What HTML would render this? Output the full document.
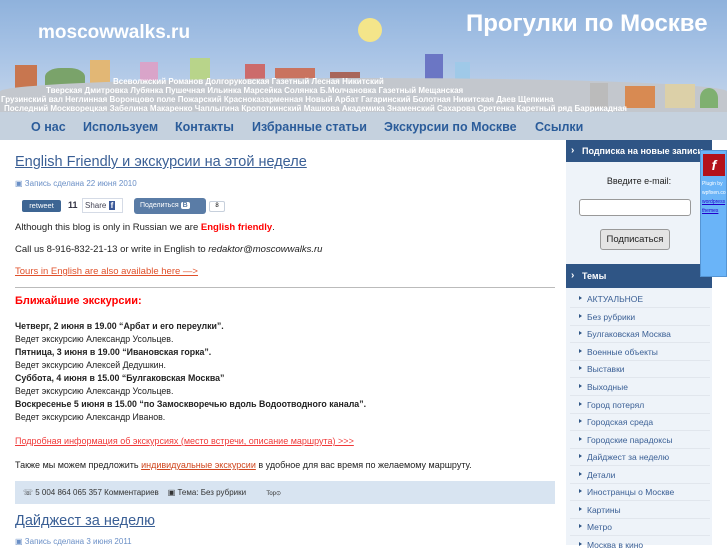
<!DOCTYPE html>
<html><head><meta charset="utf-8">
<style>
*{margin:0;padding:0;box-sizing:border-box}
body{width:727px;height:545px;overflow:hidden;background:#fff;font-family:"Liberation Sans",sans-serif;position:relative}
.abs{position:absolute}
#hdr{left:0;top:0;width:727px;height:112px;background:linear-gradient(180deg,#8fb2dc 0%,#a9c4e6 50%,#c6d6ea 100%)}
#hill{left:0;top:78px;width:727px;height:34px;background:#c3c7cd;border-radius:50% 50% 0 0/40% 40% 0 0}
#nav{left:0;top:112px;width:727px;height:28px;background:#c5d1de}
#nav span{position:absolute;top:8px;font-size:12.5px;font-weight:bold;color:#2b5c9a}
.st{position:absolute;font-size:8px;color:#fff;white-space:nowrap;font-weight:bold}
.b{position:absolute;bottom:0}
a{color:#3a5f95}
.main{left:15px;font-size:9px;color:#222}
.side{left:566px;width:146px}
.sh{background:#2f5585;color:#fff;font-weight:bold;font-size:9px;padding-left:16px;height:22px;line-height:22px}
.sh:before{content:"›";position:absolute;left:5px;font-size:10px}
.li{position:absolute;left:587px;font-size:8.5px;color:#3a5f95}
.li:before{content:"";position:absolute;left:-8px;top:2px;border-left:3px solid #2f5585;border-top:2.5px solid transparent;border-bottom:2.5px solid transparent}
.sep{position:absolute;left:570px;width:140px;height:1px;background:#e1e6ed}
</style></head><body>
<div id="hdr" class="abs"></div>
<div class="abs" style="left:10px;top:60px;width:460px;height:30px">
<div class="b" style="left:5px;width:22px;height:25px;background:#c8764f"></div>
<div class="b" style="left:35px;width:40px;height:22px;background:#7aa36a;border-radius:40% 40% 0 0"></div>
<div class="b" style="left:80px;width:20px;height:30px;background:#e2b775"></div>
<div class="b" style="left:130px;width:18px;height:28px;background:#d9a4c9"></div>
<div class="b" style="left:180px;width:20px;height:32px;background:#b8d48a"></div>
<div class="b" style="left:235px;width:20px;height:26px;background:#cc6b6b"></div>
<div class="b" style="left:265px;width:40px;height:22px;background:#c9735f"></div>
<div class="b" style="left:320px;width:30px;height:18px;background:#a8665a"></div>
<div class="b" style="left:415px;width:18px;height:36px;background:#6b76c4"></div>
<div class="b" style="left:445px;width:15px;height:28px;background:#9fc9e8"></div>
</div>
<div id="hill" class="abs"></div>
<div class="abs" style="left:580px;top:75px;width:140px;height:33px">
<div class="b" style="left:10px;width:18px;height:25px;background:#bbb"></div>
<div class="b" style="left:45px;width:30px;height:22px;background:#d88a52"></div>
<div class="b" style="left:85px;width:30px;height:24px;background:#dcd0a8"></div>
<div class="b" style="left:120px;width:18px;height:20px;background:#7fb070;border-radius:50% 50% 0 0"></div>
</div>
<div class="abs" style="left:358px;top:18px;width:24px;height:24px;border-radius:50%;background:#f4e58a"></div>
<div class="abs" style="left:38px;top:22px;font-size:19px;font-weight:bold;color:#fff">moscowwalks.ru</div>
<div class="abs" style="left:466px;top:10px;font-size:24px;font-weight:bold;color:#fff">Прогулки по Москве</div>
<div class="st" style="left:113px;top:77px">Всеволжский  Романов Долгоруковская Газетный Лесная Никитский</div>
<div class="st" style="left:46px;top:86px">Тверская Дмитровка Лубянка Пушечная Ильинка Марсейка Солянка Б.Молчановка Газетный Мещанская</div>
<div class="st" style="left:1px;top:95px">Грузинский вал Неглинная Воронцово поле Пожарский Красноказарменная Новый Арбат Гагаринский  Болотная Никитская Даев Щепкина</div>
<div class="st" style="left:4px;top:104px">Последний Москворецкая Забелина Макаренко Чаплыгина Кропоткинский Машкова Академика Знаменский Сахарова Сретенка Каретный ряд Баррикадная</div>
<div id="nav" class="abs">
<span style="left:31px">О нас</span><span style="left:83px">Используем</span><span style="left:175px">Контакты</span><span style="left:252px">Избранные статьи</span><span style="left:384px">Экскурсии по Москве</span><span style="left:535px">Ссылки</span>
</div>

<div class="abs main" style="top:154px;font-size:14.5px"><a href="#">English Friendly и экскурсии на этой неделе</a></div>
<div class="abs main" style="top:179px;font-size:8px;color:#6a8fc6">▣ Запись сделана 22 июня 2010</div>
<div class="abs" style="left:22px;top:200px;width:39px;height:12px;background:#3d6593;border-radius:2px;color:#fff;font-size:7.5px;text-align:center;line-height:12px">retweet</div>
<div class="abs" style="left:68px;top:200px;font-size:9px;font-weight:bold;color:#334">11</div>
<div class="abs" style="left:82px;top:198px;width:41px;height:15px;border:1px solid #d5dbe6;font-size:8px;color:#445;padding:2px 0 0 2px">Share <span style="background:#3b5998;color:#fff;font-weight:bold;padding:0 2px">f</span></div>
<div class="abs" style="left:134px;top:198px;width:72px;height:16px;background:#5a7ca6;border-radius:3px;color:#fff;font-size:7px;line-height:16px;padding-left:6px">Поделиться <span style="background:#fff;color:#5a7ca6;font-weight:bold;padding:0 2px;border-radius:2px">B</span></div>
<div class="abs" style="left:209px;top:201px;width:16px;height:11px;border:1px solid #c7d0dc;border-radius:2px;font-size:6px;text-align:center;line-height:9px">8</div>
<div class="abs main" style="top:222px;font-size:9.5px">Although this blog is only in Russian we are <b style="color:#f00">English friendly</b>.</div>
<div class="abs main" style="top:244px;font-size:9.5px">Call us 8-916-832-21-13 or write in English to <i>redaktor@moscowwalks.ru</i></div>
<div class="abs main" style="top:266px;font-size:9.5px"><a href="#" style="color:#e0502a">Tours in English are also available here —&gt;</a></div>
<div class="abs" style="left:15px;top:287px;width:540px;height:1px;background:#bbb"></div>
<div class="abs main" style="top:295px;font-size:11px;font-weight:bold;color:#f00">Ближайшие экскурсии:</div>
<div class="abs main" style="top:320px;line-height:13px;font-size:8.8px">
<b>Четверг, 2 июня в 19.00 “Арбат и его переулки”.</b><br>Ведет экскурсию Александр Усольцев.<br>
<b>Пятница, 3 июня в 19.00 “Ивановская горка”.</b><br>Ведет экскурсию Алексей Дедушкин.<br>
<b>Суббота, 4 июня в 15.00 “Булгаковская Москва”</b><br>Ведет экскурсию Александр Усольцев.<br>
<b>Воскресенье 5 июня в 15.00 “по Замоскворечью вдоль Водоотводного канала”.</b><br>Ведет экскурсию Александр Иванов.</div>
<div class="abs main" style="top:436px"><a href="#" style="color:#f03a3a">Подробная информация об экскурсиях (место встречи, описание маршрута) &gt;&gt;&gt;</a></div>
<div class="abs main" style="top:460px">Также мы можем предложить <a href="#" style="color:#d0461e">индивидуальные экскурсии</a> в удобное для вас время по желаемому маршруту.</div>
<div class="abs" style="left:15px;top:481px;width:540px;height:23px;background:#d8e4f1;font-size:8px;color:#333;line-height:23px;padding-left:8px">☏ 5 004 864 065 357 Комментариев &nbsp;&nbsp;&nbsp;▣ Тема: Без рубрики <span style="margin-left:18px;font-size:6px">Top⊙</span></div>
<div class="abs main" style="top:513px;font-size:14.5px"><a href="#">Дайджест за неделю</a></div>
<div class="abs main" style="top:537px;font-size:8px;color:#6a8fc6">▣ Запись сделана 3 июня 2011</div>

<div class="abs side" style="top:140px;height:405px;background:#eef3f9"></div>
<div class="abs side sh" style="top:140px;background:#2f5585">Подписка на новые записи</div>
<div class="abs" style="left:566px;top:176px;width:146px;text-align:center;font-size:9px;color:#222">Введите e-mail:</div>
<div class="abs" style="left:579px;top:199px;width:112px;height:17px;background:#fff;border:1px solid #999;border-radius:3px"></div>
<div class="abs" style="left:600px;top:229px;width:70px;height:21px;background:#e4e4e4;border:1px solid #999;border-radius:3px;font-size:9.5px;text-align:center;line-height:19px;color:#222">Подписаться</div>
<div class="abs side sh" style="top:264px;height:24px;line-height:24px">Темы</div>
<div class="abs" style="left:700px;top:150px;width:27px;height:127px;background:#6ab4f8;border:1px solid #5595d4"></div>
<div class="abs" style="left:703px;top:154px;width:22px;height:22px;background:#b3121b;color:#fff;font-weight:bold;font-style:italic;text-align:center;line-height:22px;font-size:14px">f</div>
<div class="abs" style="left:702px;top:180px;font-size:5px;color:#fff;line-height:9px">Plugin by<br>wpfixen.co<br><u style="color:#20c">wordpress</u><br><u style="color:#20c">themes</u></div>
<div class="li" style="top:294px">АКТУАЛЬНОЕ</div>
<div class="li" style="top:312px">Без рубрики</div>
<div class="li" style="top:329px">Булгаковская Москва</div>
<div class="li" style="top:347px">Военные объекты</div>
<div class="li" style="top:364px">Выставки</div>
<div class="li" style="top:382px">Выходные</div>
<div class="li" style="top:400px">Город потерял</div>
<div class="li" style="top:417px">Городская среда</div>
<div class="li" style="top:435px">Городские парадоксы</div>
<div class="li" style="top:452px">Дайджест за неделю</div>
<div class="li" style="top:470px">Детали</div>
<div class="li" style="top:487px">Иностранцы о Москве</div>
<div class="li" style="top:505px">Картины</div>
<div class="li" style="top:522px">Метро</div>
<div class="li" style="top:540px">Москва в кино</div>
<div class="sep" style="top:307px"></div><div class="sep" style="top:325px"></div><div class="sep" style="top:342px"></div><div class="sep" style="top:360px"></div><div class="sep" style="top:377px"></div><div class="sep" style="top:395px"></div><div class="sep" style="top:413px"></div><div class="sep" style="top:430px"></div><div class="sep" style="top:448px"></div><div class="sep" style="top:465px"></div><div class="sep" style="top:483px"></div><div class="sep" style="top:500px"></div><div class="sep" style="top:518px"></div><div class="sep" style="top:535px"></div>
</body></html>
